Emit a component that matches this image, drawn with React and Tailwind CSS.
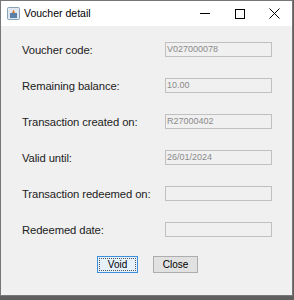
import React from "react";

const rows = [
  { label: "Voucher code:", value: "V027000078" },
  { label: "Remaining balance:", value: "10.00" },
  { label: "Transaction created on:", value: "R27000402" },
  { label: "Valid until:", value: "26/01/2024" },
  { label: "Transaction redeemed on:", value: "" },
  { label: "Redeemed date:", value: "" },
];

function AppIcon() {
  return (
    <svg width="13" height="13" viewBox="0 0 13 13">
      <rect x="0.5" y="0.5" width="12" height="12" rx="1" fill="#dfe7f0" stroke="#8aa0b8" />
      <rect x="3" y="6" width="7" height="5" fill="#5a7fa8" />
      <path d="M5 6 L6.5 2.5 L8 6 Z" fill="#e07a2a" />
    </svg>
  );
}

export default function App() {
  return (
    <div className="w-[294px] h-[300px] bg-[#5f5f5f] overflow-hidden" style={{ fontFamily: "'Liberation Sans', Arial, sans-serif" }}>
      <div className="w-[293px] h-[296px] border border-[#777] bg-[#f0f0f0] flex flex-col">
        <div className="h-[25px] bg-white flex items-center shrink-0">
          <div className="pl-[6px] pr-[4px] flex items-center"><AppIcon /></div>
          <span className="text-[10.5px] text-black">Voucher detail</span>
          <div className="ml-auto flex items-center h-full">
            <div className="w-[35px] h-full flex items-center justify-center">
              <div className="w-[10px] h-px bg-black" />
            </div>
            <div className="w-[35px] h-full flex items-center justify-center">
              <div className="w-[10px] h-[10px] border border-black" />
            </div>
            <div className="w-[35px] h-full flex items-center justify-center">
              <svg width="11" height="11" viewBox="0 0 11 11"><path d="M0.5 0.5 L10.5 10.5 M10.5 0.5 L0.5 10.5" stroke="#000" strokeWidth="1" /></svg>
            </div>
          </div>
        </div>
        <div className="flex flex-col pl-[21px] pt-[16px] gap-[21px]">
          {rows.map((r) => (
            <div key={r.label} className="flex items-center h-[15px]">
              <span className="w-[143px] whitespace-nowrap text-[11.25px] tracking-[-0.1px] text-[#222] translate-y-[1px]">{r.label}</span>
              <div className="w-[107px] h-[15px] border border-[#c0c0c0] bg-[#f0f0f0] flex items-center px-[1px] text-[9px] text-[#8a8a8a]">
                {r.value}
              </div>
            </div>
          ))}
        </div>
        <div className="flex pl-[96px] gap-[15px] mt-[19px]">
          <div className="w-[41px] h-[17px] border border-[#3c8fdd] bg-[#e5f1fb] flex items-center justify-center p-[1px]">
            <div className="w-full h-full border border-dotted border-[#555] flex items-center justify-center text-[10px] text-black">Void</div>
          </div>
          <div className="w-[45px] h-[17px] border border-[#adadad] bg-[#e1e1e1] flex items-center justify-center text-[10px] text-black">Close</div>
        </div>
      </div>
    </div>
  );
}
